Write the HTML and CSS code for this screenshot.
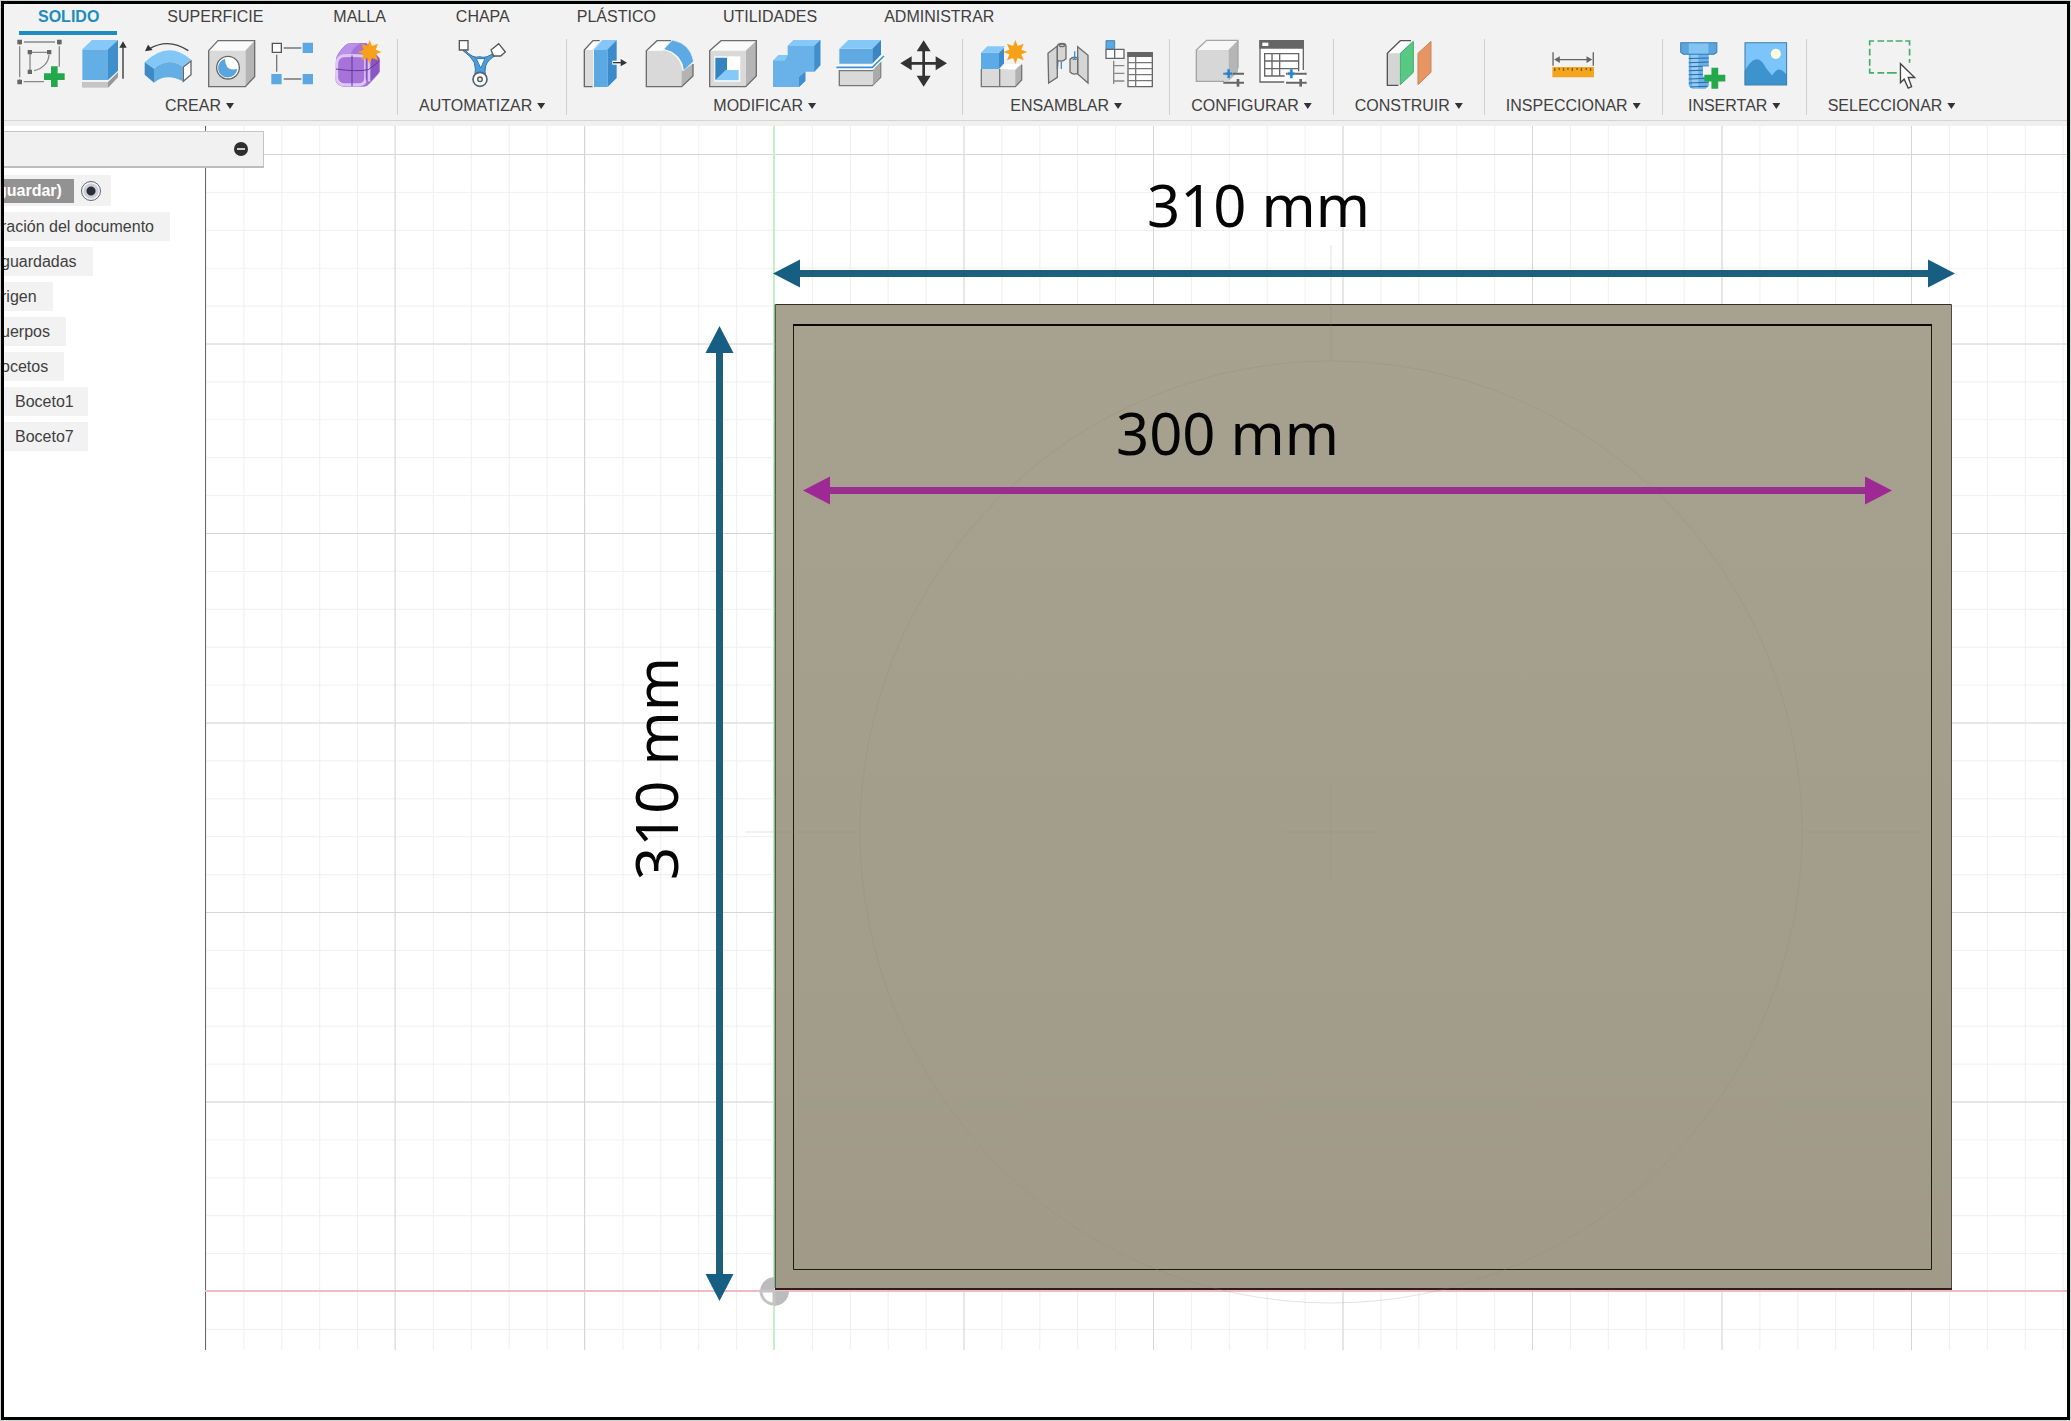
FILE: index.html
```html
<!DOCTYPE html>
<html lang="es">
<head>
<meta charset="utf-8">
<meta name="viewport" content="width=device-width, initial-scale=1">
<title>Sólido</title>
<link rel="stylesheet" href="styles.css">
</head>
<body>
<svg class="defs" aria-hidden="true">
  <defs>
    <path id="plus" d="M-10-31H10V-10H31V10H10V31H-10V10H-31V-10H-10Z" fill="#23a84c"/>
    <path id="star" d="M0-36 7-18 25-25 18-7 36 0 18 7 25 25 7 18 0 36-7 18-25 25-18 7-36 0-18-7-25-25-7-18Z" fill="#f7a11a"/>
    <g id="sliders" stroke="#666" stroke-width="6" fill="none">
      <path d="M-30-13H32M-30 14H32"/><path d="M14 3V26" stroke-width="8"/>
      <path d="M-14-28V2M-26-13H-2" stroke="#8fd0ff" stroke-width="11" opacity=".6"/>
      <path d="M-14-26V0M-24-13H-4" stroke="#2b80c4" stroke-width="7"/>
    </g>
  </defs>
</svg>
<div class="frame">
  <header class="ribbon">
    <nav class="tabs" aria-label="Fichas">
      <button class="tab tab-active">SOLIDO</button>
      <button class="tab">SUPERFICIE</button>
      <button class="tab">MALLA</button>
      <button class="tab">CHAPA</button>
      <button class="tab">PLÁSTICO</button>
      <button class="tab">UTILIDADES</button>
      <button class="tab">ADMINISTRAR</button>
    </nav>
    <div class="toolbar">
      <section class="group">
        <div class="tools">
          <button class="tool" aria-label="Crear boceto"><svg viewBox="54 117 144 144">
            <g fill="none" stroke="#8a8a8a" stroke-width="4"><path d="M59 126H178V200M59 126V245H132M90 157H148M90 157V215M102 212C130 206 146 186 147 164"/></g>
            <g fill="#f2f2f2"><path d="M66 122h6v9h-6zM165 122h6v9h-6zM55 134h9v5h-9zM174 134h9v5h-9zM55 232h9v6h-9zM66 240h5v9h-5z"/></g>
            <path d="M52 119h14v14H52zM171 119h14v14H171zM52 239h14v14H52zM83 150h13v13H83zM141 150h13v13H141zM83 209h13v13H83z" fill="#666"/>
            <use href="#plus" x="163" y="230"/></svg></button>
          <button class="tool" aria-label="Extrusión"><svg viewBox="243 117 144 144">
            <path d="M247 246H324L354 217V232L326 262H247Z" fill="#999"/><path d="M247 246H324V262H247Z" fill="#c5c5c5"/>
            <path d="M247 148H324V240H247Z" fill="#64aee6"/><path d="M247 148 276 120H354L324 148Z" fill="#86c8f8"/><path d="M324 148 354 120V212L324 240Z" fill="#3f8fcd"/>
            <path d="M369 236V137" stroke="#333" stroke-width="4"/><path d="M369 124 380 143H358Z" fill="#333"/></svg></button>
          <button class="tool" aria-label="Revolución"><svg viewBox="432 117 144 144">
            <path d="M434 187Q505 118 574 180L548 200Q505 170 462 206Z" fill="#83c7f7"/><path d="M434 187 462 206V248L434 224Z" fill="#3d8ac6"/><path d="M462 206Q505 170 548 200V244Q500 218 462 248Z" fill="#64aee6"/>
            <path d="M550 201 573 183V224L550 244Z" fill="#fff" stroke="#666" stroke-width="4"/><path d="M447 147Q505 112 565 152" fill="none" stroke="#444" stroke-width="4"/><path d="M435 154 444 134 458 150Z" fill="#333"/></svg></button>
          <button class="tool" aria-label="Agujero"><svg viewBox="621 117 144 144">
            <path d="M626 152 654 122H764L736 152Z" fill="#fafafa"/><path d="M736 152 764 122V230L736 260Z" fill="#b5b5b5"/><path d="M626 152H736V260H626Z" fill="#d9d9d9"/>
            <path d="M626 152 654 122H764V230L736 260H626Z" fill="none" stroke="#6d6d6d" stroke-width="4"/><circle cx="684" cy="203" r="34" fill="#fff" stroke="#666" stroke-width="4"/><path d="M675 176A29 29 0 1 0 712 207Q675 215 675 176Z" fill="#5aa5dd"/></svg></button>
          <button class="tool" aria-label="Patrón"><svg viewBox="810 117 144 144">
            <path d="M851 144H904M851 237H904M830 164V215" stroke="#777" stroke-width="4"/><path d="M817 130H844V157H817Z" fill="#fff" stroke="#555" stroke-width="4"/><path d="M908 128h31v31h-31zM908 222h31v31h-31zM814 222h31v31h-31z" fill="#5ba8e2"/></svg></button>
          <button class="tool" aria-label="Crear forma"><svg viewBox="999 117 144 144">
            <path d="M1008 178Q1010 160 1036 135Q1042 129 1056 129H1100L1139 175V215Q1137 222 1105 254Q1100 260 1085 260H1030Q1008 258 1006 238Z" fill="#a673db"/>
            <path d="M1008 176Q1012 160 1038 136Q1046 129 1060 130H1082Q1060 140 1050 166Q1025 164 1008 176Z" fill="#b991e8"/><path d="M1097 170Q1080 165 1030 167Q1012 172 1010 190V235Q1014 253 1032 254H1082Q1098 250 1097 232Z" fill="none" stroke="#ddc7f7" stroke-width="9"/><path d="M1097 172 1120 158 1138 176V216L1108 248Q1097 250 1097 230Z" fill="#8b56c4"/><path d="M1107 172V245" stroke="#d7bff3" stroke-width="8"/>
            <path d="M1008 207Q1070 216 1105 209L1139 183M1056 166V258" fill="none" stroke="#5f3b90" stroke-width="3"/><use href="#star" x="1109" y="156"/></svg></button>
        </div>
        <button class="group-label">CREAR</button>
      </section>
      <section class="group">
        <div class="tools">
          <button class="tool" aria-label="Modelado automatizado"><svg viewBox="205 117 144 144">
            <path d="M224 148Q250 178 270 170Q290 178 316 155L322 164Q294 178 288 198Q284 212 288 232H255Q260 206 254 188Q244 168 220 152Z" fill="#4c9fdd" stroke="#3a6f99" stroke-width="3"/><path d="M260 176H286L273 204Z" fill="#fff" stroke="#3579ad" stroke-width="3"/>
            <path d="M209 122H235V150H209ZM304 150 327 131 347 156 333 168 312 168Z" fill="#fff" stroke="#555" stroke-width="4"/><circle cx="271" cy="238" r="21" fill="#fff" stroke="#4b6478" stroke-width="5"/><circle cx="271" cy="238" r="7" fill="#f3e6c8" stroke="#555" stroke-width="4"/></svg></button>
        </div>
        <button class="group-label">AUTOMATIZAR</button>
      </section>
      <section class="group">
        <div class="tools">
          <button class="tool" aria-label="Pulsar/tirar"><svg viewBox="582 117 144 144">
            <path d="M586 260V150L612 122H634L612 150V260Z" fill="#dcdcdc"/><path d="M586 150 612 122H634L610 150Z" fill="#fff"/><path d="M610 260H586V150L612 122H632" fill="none" stroke="#666" stroke-width="4"/>
            <path d="M615 148H656V261H615Z" fill="#5ba9e4"/><path d="M615 148 640 120H683L656 148Z" fill="#83c6f7"/><path d="M656 148 683 120V234L656 261Z" fill="#3b8aca"/><path d="M670 188H698" stroke="#fff" stroke-width="12"/><path d="M672 188H698" stroke="#333" stroke-width="4"/><path d="M714 188 695 177V199Z" fill="#333"/></svg></button>
          <button class="tool" aria-label="Empalme"><svg viewBox="771 117 144 144">
            <path d="M772 152 804 122H845L822 150Q870 160 880 212L912 190V228L878 260H772Z" fill="#d9d9d9"/><path d="M772 152 804 122H845L822 152Z" fill="#fff"/><path d="M878 214 912 192V228L878 260Z" fill="#b3b3b3"/><path d="M846 122H804L772 152V260H878L912 228V192" fill="none" stroke="#6d6d6d" stroke-width="4"/><path d="M824 148 850 120Q904 130 914 184L884 212Q878 160 824 148Z" fill="#5ca9e4" stroke="#fff" stroke-width="2"/></svg></button>
          <button class="tool" aria-label="Vaciado"><svg viewBox="960 117 144 144">
            <path d="M962 152 996 122H1102L1070 152Z" fill="#fafafa"/><path d="M1070 152 1102 122V228L1070 260Z" fill="#b5b5b5"/><path d="M962 152H1070V260H962Z" fill="#d9d9d9"/><path d="M962 152 996 122H1102V228L1070 260H962Z" fill="none" stroke="#6d6d6d" stroke-width="4"/><path d="M976 169H1054V245H976Z" fill="#fff"/><path d="M979 173H1014V210L979 241Z" fill="#3384bf"/><path d="M979 241 1010 210H1049V241Z" fill="#83c9fa"/></svg></button>
          <button class="tool" aria-label="Combinar"><svg viewBox="-21 117 144 144">
            <path d="M-18 182-2 166H26V138L44 120H124V196L106 215H79V243L60 261H-18Z" fill="#69b2e9"/><path d="M-18 182-2 166H26L18 182ZM26 138 44 120H124L106 138Z" fill="#86c9f8"/><path d="M106 138 124 120V196L106 215ZM60 232 79 215V243L60 261Z" fill="#3f8ecd"/></svg></button>
          <button class="tool" aria-label="Dividir cuerpo"><svg viewBox="168 117 144 144">
            <path d="M181 146H280V191H181Z" fill="#5faae2"/><path d="M181 146 208 120H306L280 146Z" fill="#84c8f8"/><path d="M280 146 306 120V164L280 191Z" fill="#3886c5"/><path d="M181 212H280L305 188V232L280 257H181Z" fill="#d9d9d9" stroke="#777" stroke-width="4"/><path d="M282 212 304 190V231L282 255Z" fill="#aaa"/><path d="M172 202H280L315 166" fill="none" stroke="#fff" stroke-width="14"/><path d="M172 202H280L315 168" fill="none" stroke="#3b91cf" stroke-width="5"/></svg></button>
          <button class="tool" aria-label="Desplazar"><svg viewBox="357 117 144 144">
            <path d="M434 140V240M385 190H483" stroke="#333" stroke-width="8"/><path d="M434 121 455 154H413ZM434 260 455 227H413ZM364 190 398 169V211ZM504 190 470 169V211Z" fill="#333"/></svg></button>
        </div>
        <button class="group-label">MODIFICAR</button>
      </section>
      <section class="group">
        <div class="tools">
          <button class="tool" aria-label="Nuevo componente"><svg viewBox="597 117 144 144">
            <path d="M604 207H706L725 190V240L706 260H604Z" fill="#dadada"/><path d="M659 207 680 192H725L706 209Z" fill="#fff"/><path d="M706 209 725 192V240L706 260Z" fill="#b2b2b2"/><path d="M604 207V260H706L725 240V194M659 207V260" fill="none" stroke="#777" stroke-width="4"/><path d="M603 158H657V207H603Z" fill="#5dabe6"/><path d="M603 158 622 139H675L657 158Z" fill="#84c8f8"/><path d="M657 158 672 143V190L657 207Z" fill="#3d8bca"/><use href="#star" x="706" y="156"/></svg></button>
          <button class="tool" aria-label="Unión"><svg viewBox="786 117 144 144">
            <g fill="#d5d5d5" stroke="#6d6d6d" stroke-width="4"><path d="M804 160 832 138V232L806 249Z"/><path d="M832 138Q834 130 846 130T858 138V176Q848 186 834 182L832 208Z"/><ellipse cx="846" cy="136" rx="8" ry="4"/><path d="M893 140 924 166V249L893 222Z"/><path d="M893 174Q880 168 870 178V216Q880 226 893 220Z"/></g><path d="M844 184V207M884 154V180M878 178H890" stroke="#3b91d3" stroke-width="4"/></svg></button>
          <button class="tool" aria-label="Lista de materiales"><svg viewBox="983 117 144 144">
            <path d="M986 122H1012V148H986Z" fill="#5ba8e2" stroke="#4a83ad" stroke-width="3"/><path d="M986 148H1040V175H986ZM1012 148V175" fill="#fff" stroke="#666" stroke-width="4"/><path d="M1009 182V252M1009 197H1041M1009 220H1041M1009 243H1041" stroke="#888" stroke-width="4"/><path d="M1052 158H1125V260H1052Z" fill="#fff" stroke="#666" stroke-width="4"/><path d="M1050 156H1127V171H1050Z" fill="#666"/><path d="M1075 171V260M1052 188H1125M1052 206H1125M1052 224H1125M1052 242H1125" stroke="#777" stroke-width="4"/></svg></button>
        </div>
        <button class="group-label">ENSAMBLAR</button>
      </section>
      <section class="group">
        <div class="tools">
          <button class="tool" aria-label="Configurar pieza"><svg viewBox="108 117 144 144">
            <path d="M109 150 140 121H234L205 150Z" fill="#f7f7f7"/><path d="M205 150 234 121V215L205 244Z" fill="#b5b5b5"/><path d="M109 150H205V244H109Z" fill="#d7d7d7"/><path d="M234 205V121H140L109 150V244H192" fill="none" stroke="#a5a5a5" stroke-width="4"/><use href="#sliders" x="220" y="234"/></svg></button>
          <button class="tool" aria-label="Tabla de configuración"><svg viewBox="299 117 144 144">
            <path d="M302 122H432V246H302Z" fill="#fff"/><path d="M432 210V122H302V246H375" fill="none" stroke="#666" stroke-width="4"/><path d="M300 120H434V146H300Z" fill="#666"/><path d="M309 128h18v10h-18z" fill="#fff"/><path d="M316 161H418V228H316ZM338 161V228M361 161V228M316 183H418M316 206H418" fill="none" stroke="#666" stroke-width="4"/><path d="M376 214H436V250H376Z" fill="#fff"/><use href="#sliders" x="410" y="234"/></svg></button>
        </div>
        <button class="group-label">CONFIGURAR</button>
      </section>
      <section class="group">
        <div class="tools">
          <button class="tool" aria-label="Plano de desfase"><svg viewBox="676 117 144 144">
            <path d="M683 160 722 122H755L720 160V256H683Z" fill="#d5d5d5"/><path d="M683 160 722 122H755L720 160Z" fill="#fff"/><path d="M716 256H683V160L722 122H754" fill="none" stroke="#555" stroke-width="4"/><path d="M722 160 761 124V217L722 254Z" fill="#57c984" stroke="#43aa6d" stroke-width="3"/><path d="M775 160 814 124V217L775 254Z" fill="#e79663" stroke="#c68659" stroke-width="3"/></svg></button>
        </div>
        <button class="group-label">CONSTRUIR</button>
      </section>
      <section class="group">
        <div class="tools">
          <button class="tool" aria-label="Medir"><svg viewBox="27 115 142 142">
            <path d="M39 154V194M158 154V194M48 176H150" stroke="#666" stroke-width="4"/><path d="M42 176 59 166V186ZM155 176 138 166V186Z" fill="#666"/><path d="M37 198H160V228H37Z" fill="#f3a51c"/><path d="M44 201v9M57 201v6M70 201v9M83 201v6M96 201v9M110 201v6M123 201v9M137 201v6M150 201v9" stroke="#8b5b08" stroke-width="4"/></svg></button>
        </div>
        <button class="group-label">INSPECCIONAR</button>
      </section>
      <section class="group">
        <div class="tools">
          <button class="tool" aria-label="Insertar fijación"><svg viewBox="411 115 142 142">
            <path d="M440 158H499V254L490 262H450L440 254Z" fill="#67b2ea"/><path d="M446 158H468V262H450Z" fill="#8fcdf8"/><path d="M440 173 499 171M440 185 499 183M440 197 499 195M440 209 499 207M440 221 499 219M440 233 499 231M440 245 499 243M444 257 496 255" stroke="#31679a" stroke-width="3"/><path d="M416 126H523V154L515 160H424L416 154Z" fill="#5ba5dc"/><path d="M440 127H498V159H440Z" fill="#83c4f3"/><path d="M416 126H523V154L515 160H424L416 154Z" fill="none" stroke="#397fb5" stroke-width="3"/><path d="M482 196H502V226H482Z" fill="#f2f2f2"/><use href="#plus" x="517" y="231"/></svg></button>
          <button class="tool" aria-label="Insertar imagen"><svg viewBox="592 115 142 142">
            <path d="M600 125H725V251H600Z" fill="#7bc5fa"/><path d="M600 210C625 165 645 165 663 201L681 223C697 199 708 200 725 223V251H600Z" fill="#3d93cd"/><circle cx="692" cy="159" r="15" fill="#fffde0"/><path d="M601 126H724V251H601Z" fill="none" stroke="#457fa8" stroke-width="3"/></svg></button>
        </div>
        <button class="group-label">INSERTAR</button>
      </section>
      <section class="group">
        <div class="tools">
          <button class="tool" aria-label="Seleccionar"><svg viewBox="960 115 142 142">
            <path d="M965 134V121H978M1070 121H1083V134M965 202V215H978M988 121H1008M1016 121H1034M1042 121H1062M988 215H1008M1016 215H1045M965 144V164M965 174V194M1083 144V164M1083 174V185" fill="none" stroke="#43ae66" stroke-width="5"/><path d="M1056 188V244L1067 234 1079 260 1089 256 1079 229H1098Z" fill="#fff" stroke="#444" stroke-width="4"/></svg></button>
        </div>
        <button class="group-label">SELECCIONAR</button>
      </section>
    </div>
  </header>

  <main class="workspace">
    <svg class="scene" viewBox="4 126 2063 1224" role="img" aria-label="Vista superior del sólido">
      <defs>
        <pattern id="minor" x="774" y="1291" width="37.9" height="37.9" patternUnits="userSpaceOnUse"><path d="M0 0H37.9V1H1V37.9H0Z" fill="#efefef"/></pattern>
        <linearGradient id="plate" x1="0" y1="0" x2="0" y2="1"><stop offset="0" stop-color="#a7a190"/><stop offset="1" stop-color="#a19a89"/></linearGradient>
        <path id="head" d="M0 0 27-14V14Z"/>
      </defs>
      <path d="M205 126H2067V1350H205Z" fill="url(#minor)"/>
      <path d="M395 126V1350M584.5 126V1350M964 126V1350M1153.5 126V1350M1343 126V1350M1532.5 126V1350M1722 126V1350M1911.5 126V1350M205 154.5H2067M205 344H2067M205 533.5H2067M205 723H2067M205 912.5H2067M205 1102H2067" stroke="#d6d6d6" fill="none"/>
      <path d="M205.500 126V1350" stroke="#666"/>
      <path d="M774 126V1350" stroke="#c5efc5" stroke-width="2"/>
      <path d="M205 1291H2067" stroke="#f0bcbf" stroke-width="2"/>
      <path d="M774 1291V1277A15 15 0 0 0 760 1291ZM774 1291V1306A15 15 0 0 0 789 1291Z" fill="#bcbcbc"/>
      <path d="M774 1291V1304A13 13 0 0 1 761 1291Z" fill="#fff" stroke="#c4c4c4" stroke-width="3"/>
      <path d="M775.500 304.500H1951.500V1289H775.500Z" fill="url(#plate)" stroke="#4d4a42"/>
      <path d="M776 304.500H1951" stroke="#332f28"/>
      <path d="M775 304V1288" stroke="#4f7a51"/>
      <path d="M775 1289H1952" stroke="#321c20" stroke-width="2"/>
      <path d="M793.500 324.500V1269.500H1931.500V324.500" fill="none" stroke="#1c1812"/>
      <path d="M793 325H1932" stroke="#0c0a06" stroke-width="2"/>
      <g fill="none" stroke="#8d8778" opacity=".24"><circle cx="1331" cy="832" r="471"/><path d="M1331 784V880M1283 832H1379M1331 245V360M745 832H858M1804 832H1920"/></g>
      <g stroke-width="7">
        <g stroke="#1c607c"><path d="M798 273.500H1930M719.500 350V1276"/></g>
        <path d="M828 490.500H1866" stroke="#982f8e"/>
      </g>
      <g fill="#165f83"><use href="#head" transform="translate(773 273.500)"/><use href="#head" transform="translate(1955 273.500) rotate(180)"/><use href="#head" transform="translate(719.500 326) rotate(90)"/><use href="#head" transform="translate(719.500 1301) rotate(-90)"/></g>
      <g fill="#9f2994"><use href="#head" transform="translate(803 490.500)"/><use href="#head" transform="translate(1892 490.500) rotate(180)"/></g>
      <g class="dimension">
        <text x="1147" y="227">310 mm</text>
        <text x="1116" y="455">300 mm</text>
        <text transform="translate(678 880) rotate(-90)">310 mm</text>
      </g>
    </svg>
    <aside class="browser" aria-label="Navegador">
      <div class="browser-bar"><button class="collapse" aria-label="Contraer"></button></div>
      <ul class="tree">
        <li class="node root"><label class="root-name" for="active">guardar)</label><input class="root-radio" type="radio" id="active" checked></li>
        <li class="node">ración del documento</li>
        <li class="node">guardadas</li>
        <li class="node">rigen</li>
        <li class="node">uerpos</li>
        <li class="node">ocetos</li>
        <li class="node child">Boceto1</li>
        <li class="node child">Boceto7</li>
      </ul>
    </aside>
  </main>
</div>
</body>
</html>
```
FILE: styles.css
```css
* { box-sizing: border-box; }

body {
  margin: 0;
  padding: 1px;
  background: #cdd6d0;
  color: #404040;
  font: 16px/18px "Liberation Sans", Arial, sans-serif;
}

button {
  margin: 0;
  padding: 0;
  border: 0;
  background: none;
  color: inherit;
  font: inherit;
}

.defs { position: absolute; width: 0; height: 0; }

.frame {
  display: flex;
  flex-direction: column;
  min-height: calc(100vh - 2px);
  border: 3px solid #000;
  background: #fff;
}

/* Ribbon */
.ribbon {
  border-bottom: 5px solid #f0f0f0;
  background: #f2f2f2;
}

.tabs { display: flex; height: 31px; }

.tab {
  position: relative;
  padding: 4px 36px 9px 34px;
}

.tab:nth-child(2) { padding-left: 32px; }
.tab:nth-child(n + 4) { padding-right: 33px; }

.tab-active { color: #1e8cc0; font-weight: bold; }

.tab-active::after {
  content: "";
  position: absolute;
  right: 18px;
  bottom: 0;
  left: 15px;
  height: 4px;
  background: #1e8cc0;
}

.toolbar {
  display: flex;
  padding: 4px 0 5px;
  border-bottom: 1px solid #d4d4d4;
}

.group {
  display: flex;
  flex-direction: column;
  align-items: center;
  justify-content: space-between;
  height: 76px;
  padding: 0 16px;
  border-right: 1px solid #d0d0d0;
}

.group:first-child { padding-left: 14px; }
.group:last-child { border-right: 0; }

.tools { display: flex; gap: 15px; }

.tool { width: 48px; height: 48px; }

.tool svg {
  display: block;
  width: 48px;
  height: 48px;
  overflow: visible;
}

.group-label {
  display: flex;
  align-items: center;
  gap: 5px;
  padding: 0 5px;
}

.group-label::after {
  content: "";
  width: 8px;
  height: 6px;
  background: #333;
  clip-path: polygon(0 0, 100% 0, 50% 100%);
}

/* Workspace */
.workspace { position: relative; overflow: hidden; }

.scene { display: block; width: 100%; height: auto; }

.dimension {
  fill: #050505;
  font: 58px "Noto Sans", sans-serif;
}

.browser {
  position: absolute;
  top: 5px;
  left: 0;
}

.browser-bar {
  display: flex;
  align-items: center;
  justify-content: flex-end;
  width: 260px;
  height: 37px;
  padding-right: 15px;
  border: 1px solid #c4c4c4;
  border-bottom: 2px solid #bdbdbd;
  border-left: 0;
  background: #f1f1f1;
}

.collapse {
  display: grid;
  place-items: center;
  width: 14px;
  height: 14px;
  border-radius: 50%;
  background: #2e2e2e;
}

.collapse::before {
  content: "";
  width: 8px;
  height: 2px;
  background: #ccc;
}

.tree {
  display: flex;
  flex-direction: column;
  align-items: flex-start;
  gap: 6px;
  margin: 7px 0 0 -3px;
  padding: 0;
  list-style: none;
}

.node {
  display: flex;
  align-items: center;
  height: 29px;
  padding-right: 16px;
  background: #f2f2f2;
}

.child { padding: 0 14px; }

.root {
  gap: 7px;
  height: 31px;
  margin-left: -4px;
  padding-right: 10px;
}

.root-name {
  padding: 3px 12px 3px 0;
  background: #929292;
  color: #fff;
  font-weight: bold;
}

.root-radio {
  width: 20px;
  height: 20px;
  margin: 0;
  border: 1px solid #666;
  border-radius: 50%;
  appearance: none;
  background: radial-gradient(circle, #2c2c34 0 4px, #c9d0dc 5px 7px, #f6f6f6 8px);
}
```
